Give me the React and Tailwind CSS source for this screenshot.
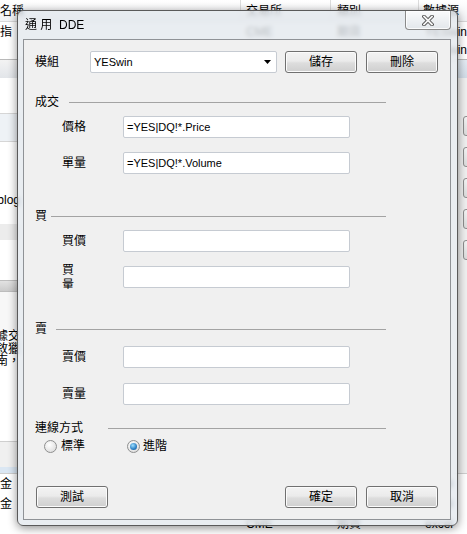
import React from 'react';

const cols = ['w-[240px]', 'w-[90px]', 'w-[88px]', 'flex-1'];

const WinButton = ({ children, className = '' }) => (
  <button
    className={`flex h-[22px] w-[72px] items-center justify-center rounded-[3px] border border-[#707070] bg-[linear-gradient(#f3f3f3_0%,#ebebeb_45%,#dddddd_55%,#cfcfcf_100%)] text-[12px] leading-none text-black shadow-[inset_0_0_0_1px_#fbfbfb] ${className}`}
  >
    {children}
  </button>
);

const TextBox = ({ children }) => (
  <div className="flex h-[22px] w-[227px] items-center rounded-[2px] border border-[#c6cbd2] bg-white pl-[3px] text-[11px] text-black">
    {children}
  </div>
);

const GroupHeader = ({ label, gap, top }) => (
  <div className={`flex h-[16px] items-center pl-[11px] pr-[64px] ${top}`}>
    <span className="text-[12px] leading-none">{label}</span>
    <div className={`h-0 flex-1 border-t border-[#a3a3a3] ${gap}`} />
  </div>
);

const Field = ({ label, value, top }) => (
  <div className={`flex h-[22px] items-center pl-[38px] ${top}`}>
    <span className="w-[61px] text-[12px] leading-none">{label}</span>
    <TextBox>{value}</TextBox>
  </div>
);

const Radio = ({ checked, className = '' }) => (
  <span
    className={`flex h-[13px] w-[13px] items-center justify-center rounded-full border border-[#8e8f8f] bg-[radial-gradient(circle_at_40%_35%,#ffffff,#d6d6d6)] ${className}`}
  >
    {checked && (
      <span className="h-[7px] w-[7px] rounded-full bg-[radial-gradient(circle_at_40%_35%,#9fe0ff,#2a7fc4_60%,#1b4f86)]" />
    )}
  </span>
);

const DataRow = ({ cells, h = 'h-[18px]' }) => (
  <div className={`flex ${h} shrink-0 items-center whitespace-nowrap text-[12px]`}>
    {cells.map((c, i) => (
      <div key={i} className={`${cols[i]} overflow-hidden ${i === 0 ? 'pl-0' : i === 1 ? 'pl-[6px]' : 'pl-[7px]'}`}>
        {c}
      </div>
    ))}
  </div>
);

export default function App() {
  return (
    <div className="relative h-[534px] w-[467px] overflow-hidden bg-white font-['Liberation_Sans','Noto_Sans_CJK_TC',sans-serif] text-black">
      {/* application behind the dialog */}
      <div className="flex h-full flex-col">
        <div className="flex h-[22px] shrink-0 border-b border-[#d8d8d8] bg-[linear-gradient(#ffffff,#f1f2f4)] text-[12px] leading-[22px] whitespace-nowrap">
          <div className="w-[240px]">名稱</div>
          <div className="w-[90px] border-l border-[#dcdcdc] pl-[5px]">交易所</div>
          <div className="w-[88px] border-l border-[#dcdcdc] pl-[6px]">類別</div>
          <div className="flex-1 border-l border-[#dcdcdc] pl-[4px]">數據源</div>
        </div>
        <div className="h-[1px] shrink-0" />
        <DataRow cells={['指', 'CME', '期貨', 'YESwin']} />
        <DataRow cells={['', 'CME', '期貨', 'YESwin']} />

        <div className="flex flex-1 border-t border-[#b9b9b9]">
          <div className="flex w-[20px] flex-col overflow-hidden">
            <div className="h-[18px] shrink-0 bg-[linear-gradient(#f3f3f3,#e2e5e9)]" />
            <div className="h-[35px] shrink-0 bg-white" />
            <div className="h-[28px] shrink-0 border-t border-[#d6d6d6] bg-[#eef2f6]" />
            <div className="h-[52px] shrink-0 border-t border-[#d6d6d6] bg-white" />
            <div className="flex h-[14px] shrink-0 justify-end whitespace-nowrap text-[12px] leading-[14px]">blog</div>
            <div className="h-[17px] shrink-0 bg-white" />
            <div className="h-[16px] shrink-0 bg-[#ececec]" />
            <div className="h-[40px] shrink-0 bg-white" />
            <div className="h-[12px] shrink-0 border-y border-[#bdbdbd] bg-[linear-gradient(#e2e2e2,#cbcbcb)]" />
            <div className="h-[38px] shrink-0 bg-[#f7f7f7]" />
            <div className="flex shrink-0 flex-col items-end whitespace-nowrap text-[12px] leading-[12.5px]">
              <span>據交</span>
              <span>敘獵</span>
              <span>南，</span>
            </div>
            <div className="flex-1 bg-white" />
            <div className="h-[26px] shrink-0 border-t border-[#cfcfcf] bg-[#f0f0f0]" />
            <div className="h-[6px] shrink-0 bg-[#dbe7f3]" />
          </div>
          <div className="flex-1 bg-white" />
          <div className="flex w-[10px] flex-col overflow-hidden bg-[#f0f0f0]">
            <div className="h-[18px] shrink-0 bg-[linear-gradient(#e4ecf4,#d2dde8)]" />
            <div className="ml-[6px] mt-[38px] flex flex-col gap-[11px]">
              {[0, 1, 2, 3, 4].map((i) => (
                <div key={i} className="h-[20px] w-[20px] rounded-[3px] border border-[#8e8e8e] bg-[linear-gradient(#f5f5f5,#dcdcdc)]" />
              ))}
            </div>
          </div>
        </div>

        <div className="border-t border-[#cfcfcf]" />
        <DataRow h="h-[20px]" cells={['金', 'CME', '期貨', 'excel']} />
        <DataRow h="h-[20px]" cells={['金', 'CME', '期貨', 'excel']} />
        <DataRow h="h-[20px]" cells={['', 'CME', '期貨', 'excel']} />
      </div>

      {/* dialog window */}
      <div className="absolute left-[17px] top-[10px] flex h-[516px] w-[441px] flex-col rounded-[6px] border border-[#5a5a5a] bg-[#e4e9ee]/80 pb-[5px] pl-[5px] pr-[6px] shadow-[0_2px_10px_rgba(0,0,0,0.45)] backdrop-blur-[2px]">
        <div className="flex h-[28px] shrink-0 items-start">
          <span className="pl-[2px] pt-[8px] text-[12px] leading-[12px]">通&nbsp;用&nbsp;&nbsp;DDE</span>
          <div className="ml-auto flex h-[19px] w-[46px] items-center justify-center rounded-b-[4px] border border-t-0 border-[#8a8a8a] bg-[linear-gradient(#fafbfc,#e3e7eb)] shadow-[inset_0_0_0_1px_rgba(255,255,255,0.8)]">
            <svg width="12" height="11" viewBox="0 0 12 11">
              <path d="M2 1.5 L10 9.5 M10 1.5 L2 9.5" stroke="#4a4a4a" strokeWidth="3.6" strokeLinecap="square" />
              <path d="M2 1.5 L10 9.5 M10 1.5 L2 9.5" stroke="#f4f4f4" strokeWidth="1.8" strokeLinecap="square" />
            </svg>
          </div>
        </div>

        <div className="flex flex-1 flex-col border border-[#8f9296] bg-[#f0f0f0] pt-[11px] text-[12px]">
          <div className="flex h-[22px] items-center pl-[11px]">
            <span className="w-[55px] leading-none">模組</span>
            <div className="flex h-[22px] w-[187px] items-center justify-between rounded-[2px] border border-[#c6cbd2] bg-white pl-[3px] pr-[5px] text-[11px]">
              <span>YESwin</span>
              <svg width="7" height="4" viewBox="0 0 7 4">
                <path d="M0 0 H7 L3.5 4 Z" fill="#000" />
              </svg>
            </div>
            <WinButton className="ml-[8px]">儲存</WinButton>
            <WinButton className="ml-[9px]">刪除</WinButton>
          </div>

          <GroupHeader label="成交" gap="ml-[10px]" top="mt-[21px]" />
          <Field label="價格" value="=YES|DQ!*.Price" top="mt-[6px]" />
          <Field label="單量" value="=YES|DQ!*.Volume" top="mt-[14px]" />

          <GroupHeader label="買" gap="ml-[4px]" top="mt-[34px]" />
          <Field label="買價" value="" top="mt-[6px]" />
          <div className="mt-[11px] flex h-[26px] items-start pl-[38px]">
            <div className="w-[61px]">
              <div className="h-[26px] w-[13px] overflow-hidden leading-[15px]">買量</div>
            </div>
            <div className="mt-[3px]">
              <TextBox />
            </div>
          </div>

          <GroupHeader label="賣" gap="ml-[9px]" top="mt-[32px]" />
          <Field label="賣價" value="" top="mt-[9px]" />
          <Field label="賣量" value="" top="mt-[15px]" />

          <GroupHeader label="連線方式" gap="ml-[25px]" top="mt-[15px]" />
          <div className="mt-[2px] flex h-[16px] items-center pl-[20px] leading-none">
            <Radio />
            <span className="ml-[4px]">標準</span>
            <Radio checked className="ml-[42px]" />
            <span className="ml-[3px]">進階</span>
          </div>

          <div className="mt-[32px] flex h-[22px] items-center pl-[12px]">
            <WinButton>測試</WinButton>
            <WinButton className="ml-[177px]">確定</WinButton>
            <WinButton className="ml-[9px]">取消</WinButton>
          </div>
        </div>
      </div>
    </div>
  );
}
